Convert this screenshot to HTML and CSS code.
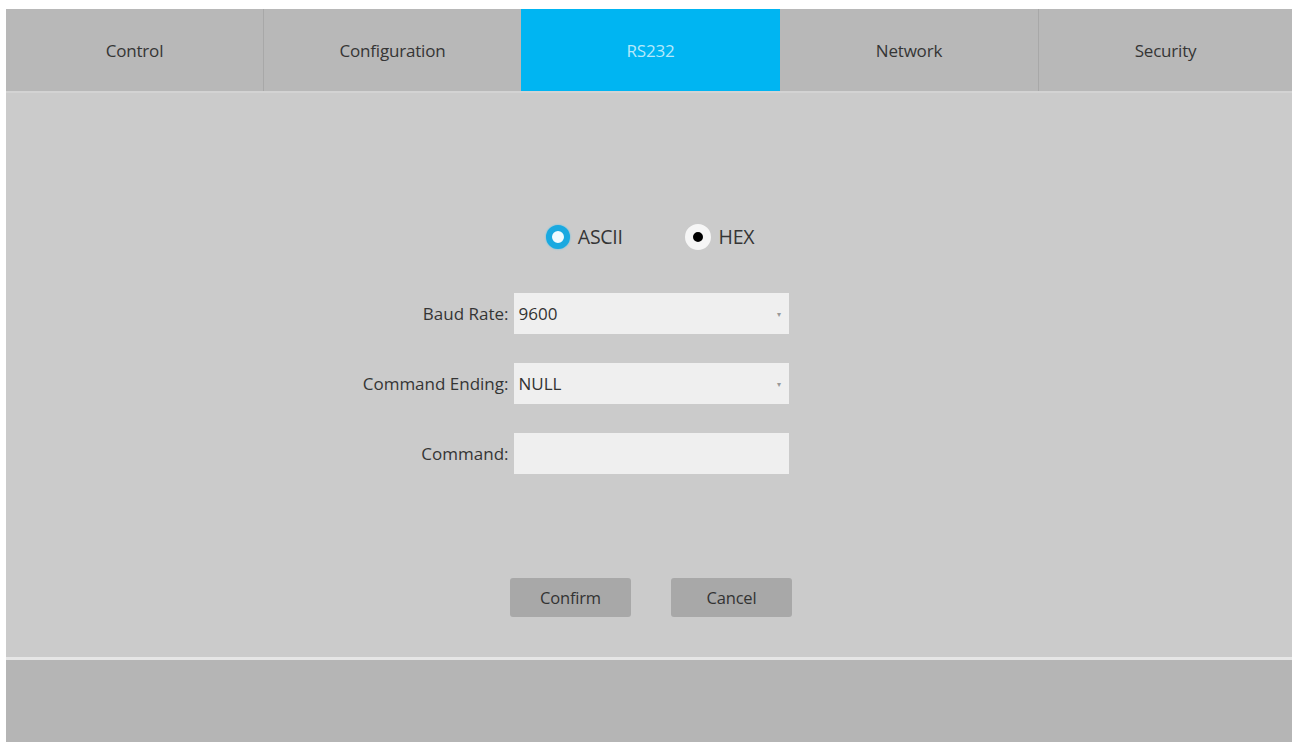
FILE: index.html
```html
<!DOCTYPE html>
<html>
<head>
<meta charset="utf-8">
<link rel="stylesheet" href="styles.css">
</head>
<body>
<div class="frame">
  <nav class="tabs">
    <div class="tab">Control</div>
    <div class="tab">Configuration</div>
    <div class="tab active">RS232</div>
    <div class="tab">Network</div>
    <div class="tab">Security</div>
  </nav>
  <main class="panel">
    <div class="radios">
      <label class="radio"><span class="dot dot-on"></span><span>ASCII</span></label>
      <label class="radio"><span class="dot dot-off"></span><span>HEX</span></label>
    </div>
    <div class="form">
      <div class="label">Baud Rate:</div>
      <div class="field select"><span>9600</span><span class="caret">▾</span></div>
      <div class="label">Command Ending:</div>
      <div class="field select"><span>NULL</span><span class="caret">▾</span></div>
      <div class="label">Command:</div>
      <div class="field"></div>
    </div>
    <div class="buttons">
      <button class="btn">Confirm</button>
      <button class="btn">Cancel</button>
    </div>
  </main>
  <footer class="footer"></footer>
</div>
</body>
</html>
```
FILE: styles.css
```css
html, body {
  margin: 0;
  padding: 0;
  background: #ffffff;
  height: 100%;
  overflow: hidden;
}
body {
  font-family: "Open Sans", "Noto Sans", sans-serif;
  color: #333;
}
.frame {
  margin: 9px 6px 0 6px;
  height: 733px;
  display: flex;
  flex-direction: column;
  background: #cbcbcb;
}
.tabs {
  display: grid;
  grid-template-columns: 257px 258px 259px 258px 1fr;
  height: 82px;
  background: #b8b8b8;
  border-bottom: 2px solid #d3d3d3;
}
.tab {
  display: flex;
  align-items: center;
  justify-content: center;
  font-size: 17px;
  color: #353535;
  border-left: 1px solid #a8a8a8;
  padding-top: 1px;
  letter-spacing: -0.2px;
}
.tab:first-child { border-left: none; }
.tab.active {
  background: #00b5f2;
  color: #b5e9fb;
  border-left: none;
}
.tab.active + .tab { border-left: none; }
.panel {
  height: 564px;
  display: flex;
  flex-direction: column;
  align-items: center;
}
.radios {
  margin-top: 131px;
  display: flex;
  gap: 62px;
  padding-left: 2px;
  height: 26px;
  align-items: center;
}
.radio {
  display: flex;
  align-items: center;
  gap: 8px;
  font-size: 19.5px;
  line-height: 26px;
  color: #353535;
  letter-spacing: -0.3px;
}
.dot {
  display: inline-block;
  border-radius: 50%;
  box-sizing: border-box;
}
.dot-on {
  width: 24px;
  height: 24px;
  background: #f0fbff;
  border: 6px solid #1aa9e0;
  box-shadow: 0 0 2px #4cc0ec;
}
.dot-off {
  width: 26px;
  height: 26px;
  background: #000;
  border: 8px solid #f6f6f6;
}
.form {
  margin-top: 43px;
  display: grid;
  grid-template-columns: 1fr 275px 1fr;
  row-gap: 29px;
  width: 100%;
  padding-left: 4px;
  box-sizing: border-box;
}
.label {
  grid-column: 1;
  justify-self: end;
  align-self: center;
  font-size: 17px;
  color: #353535;
  padding-right: 5px;
}
.field {
  grid-column: 2;
  height: 41px;
  background: #efefef;
  box-sizing: border-box;
  display: flex;
  align-items: center;
  justify-content: space-between;
  padding: 0 8px 0 5px;
  font-size: 17px;
  color: #333;
}
.caret {
  font-size: 8px;
  color: #999;
}
.buttons {
  margin-top: 104px;
  display: flex;
  gap: 40px;
  padding-left: 4px;
}
.btn {
  width: 121px;
  height: 39px;
  border: none;
  border-radius: 3px;
  background: #a8a8a8;
  font-family: "Open Sans", "Noto Sans", sans-serif;
  font-size: 16.5px;
  color: #333;
  letter-spacing: -0.2px;
}
.footer {
  flex: 1;
  background: #b5b5b5;
  border-top: 3px solid #e6e6e6;
}
```
